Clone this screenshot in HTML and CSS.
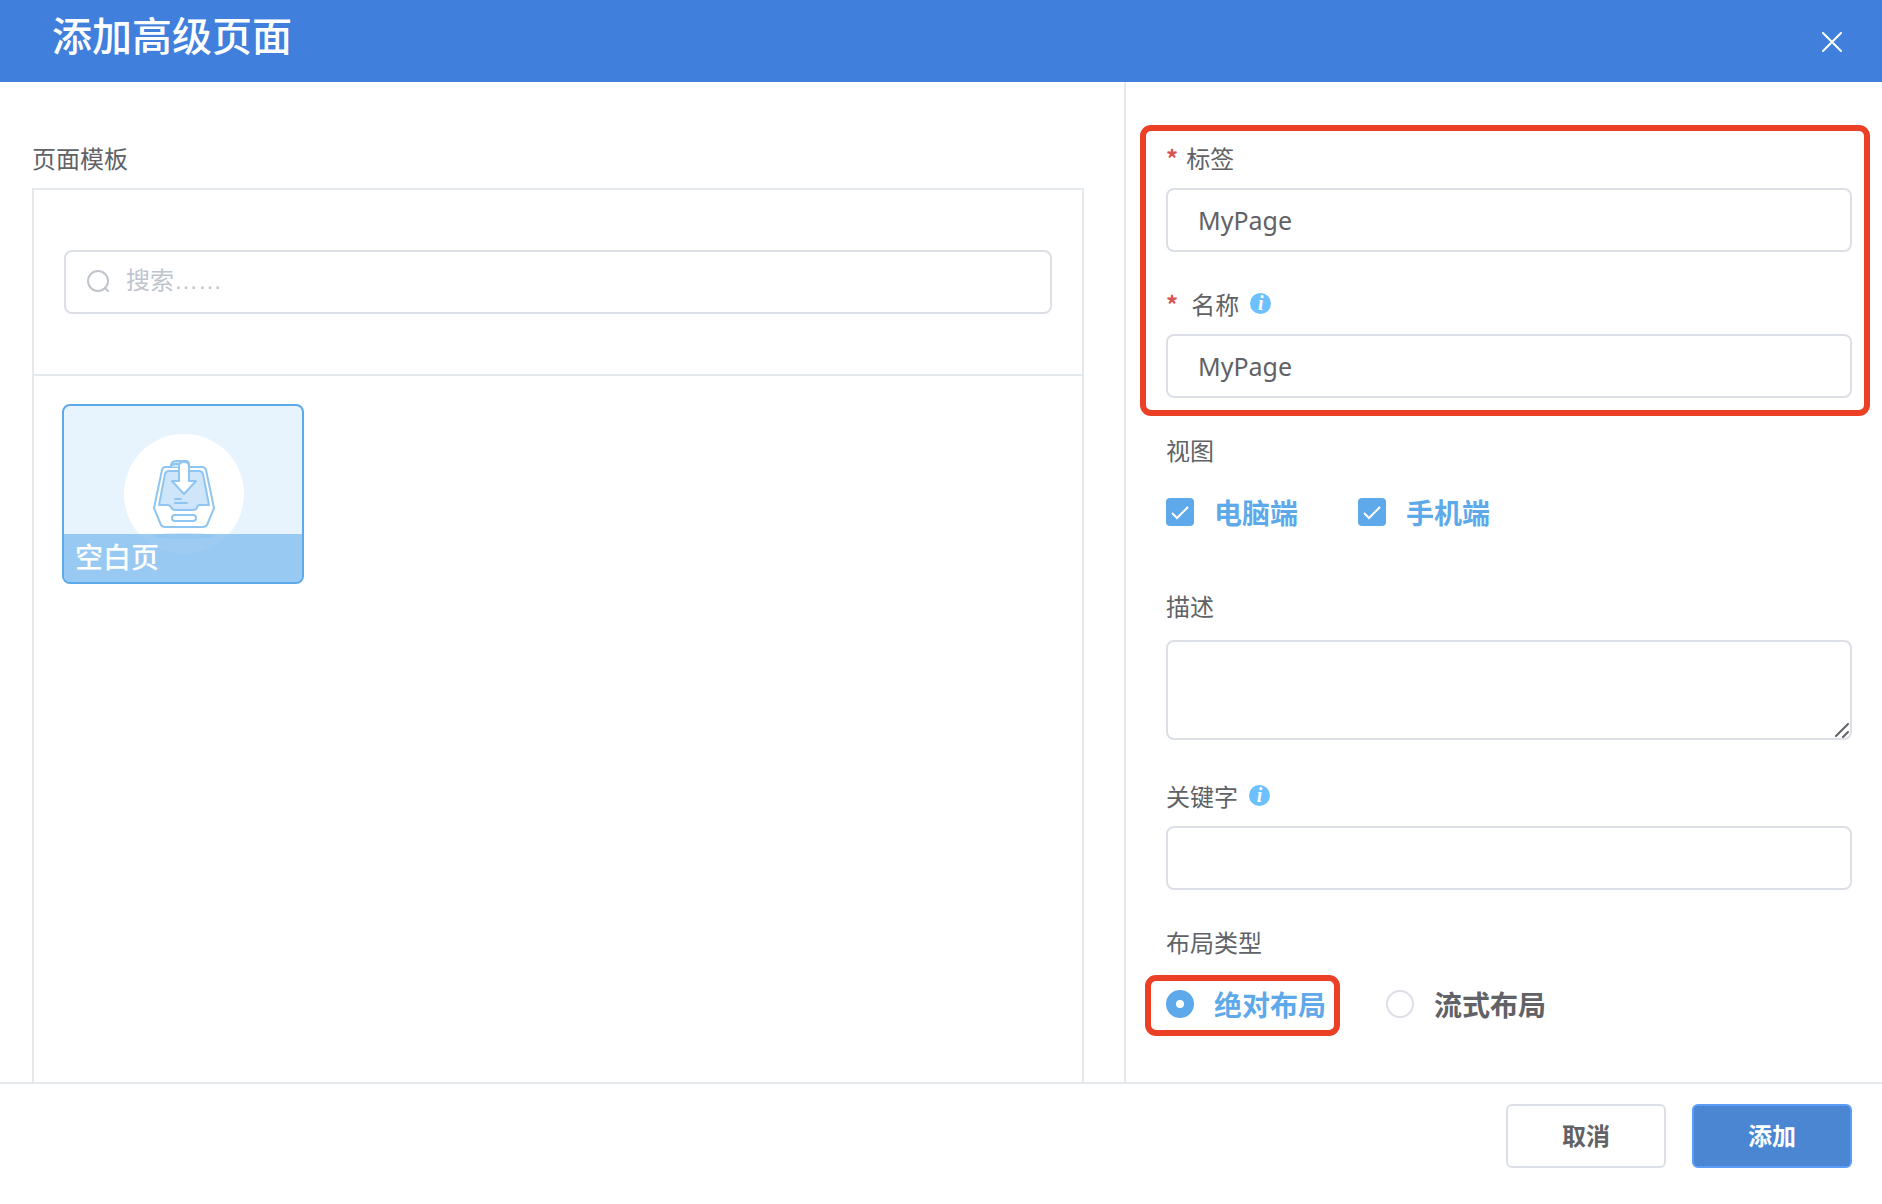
FILE: index.html
```html
<!DOCTYPE html>
<html lang="zh-CN">
<head>
<meta charset="utf-8">
<meta name="viewport" content="width=device-width, initial-scale=1">
<title>添加高级页面</title>
<link rel="stylesheet" href="styles.css">
</head>
<body>
<header class="header">
  <h1 class="title">添加高级页面</h1>
  <button class="close" type="button" aria-label="关闭">
    <svg width="20" height="20" viewBox="0 0 20 20" fill="none" stroke="currentColor" stroke-width="2" stroke-linecap="round"><path d="M1 1l18 18M19 1L1 19"/></svg>
  </button>
</header>

<main class="main">
  <section class="templates">
    <h2 class="label">页面模板</h2>
    <div class="panel">
      <div class="search-area">
        <div class="search">
          <svg class="search-icon" width="24" height="24" viewBox="0 0 24 24" fill="none" stroke="currentColor" stroke-width="2" stroke-linecap="round"><circle cx="11" cy="11" r="10"/><path d="M18 18l3 3"/></svg>
          <input class="input search-input" type="search" placeholder="搜索……" aria-label="搜索">
        </div>
      </div>
      <div class="cards">
        <button class="card" type="button">
          <svg class="card-art" viewBox="0 0 238 176" fill="none" stroke="#8fc5f1" stroke-width="2" stroke-linejoin="round" stroke-linecap="round" aria-hidden="true">
            <circle cx="120" cy="88" r="60" fill="#fff" stroke="none"/>
            <ellipse cx="120" cy="130" rx="31" ry="3" fill="#cfe6fa" stroke="none"/>
            <path d="M101 61H138Q141 61 142 64L150 102L143 119Q142 121 139 121H101Q98 121 97 119L90 102L98 64Q99 61 101 61Z" fill="#fff"/>
            <path d="M105 65H135Q138 65 139 68L145 99H136Q133 99 133 102Q132 104 129 104H111Q108 104 107 101Q106 99 103 99H95L101 68Q102 65 105 65Z" fill="#cfe5f9"/>
            <path d="M107 61V60Q107 55 112 55H122Q126 55 126 59V74H115V61Z" fill="#cfe5f9" stroke="none"/>
            <path d="M107 61V60Q107 55 112 55H122Q125 55 125 59"/>
            <path d="M107 61Q107 58 111 58H114"/>
            <path d="M115 60Q115 56 120 56Q125 56 125 60V75H132L120 88L108 75H115Z" fill="#fff"/>
            <path d="M111 93H117M111 97H123"/>
            <rect x="108" y="109" width="24" height="6" rx="3" fill="#fff"/>
          </svg>
          <span class="card-name">空白页</span>
        </button>
      </div>
    </div>
  </section>

  <form class="form" id="page-form">
    <div class="required-group">
      <div class="field">
        <label class="label" for="tag"><span class="star">*</span>标签</label>
        <input class="input" id="tag" type="text" value="MyPage">
      </div>
      <div class="field">
        <label class="label label-wide" for="name"><span class="star">*</span>名称<span class="info" aria-hidden="true">i</span></label>
        <input class="input" id="name" type="text" value="MyPage">
      </div>
    </div>

    <fieldset class="field choices-field">
      <legend class="label">视图</legend>
      <div class="choices">
        <label class="choice"><input class="check" type="checkbox" checked>电脑端</label>
        <label class="choice"><input class="check" type="checkbox" checked>手机端</label>
      </div>
    </fieldset>

    <div class="field">
      <label class="label" for="desc">描述</label>
      <div class="area-wrap">
        <textarea class="input area" id="desc"></textarea>
        <svg class="grip" width="16" height="16" viewBox="0 0 16 16" fill="none" stroke="#606266" stroke-width="2" stroke-linecap="round"><path d="M2 14L14 2M9 15l5-5"/></svg>
      </div>
    </div>

    <div class="field">
      <label class="label" for="keywords">关键字<span class="info" aria-hidden="true">i</span></label>
      <input class="input" id="keywords" type="text">
    </div>

    <fieldset class="field">
      <legend class="label">布局类型</legend>
      <div class="choices">
        <label class="choice highlighted"><input class="radio" type="radio" name="layout" checked>绝对布局</label>
        <label class="choice"><input class="radio" type="radio" name="layout">流式布局</label>
      </div>
    </fieldset>
  </form>
</main>

<footer class="footer">
  <button class="button" type="button">取消</button>
  <button class="button primary" type="submit" form="page-form">添加</button>
</footer>
</body>
</html>
```
FILE: styles.css
```css
* {
  box-sizing: border-box;
}

body {
  margin: 0;
  min-height: 100vh;
  display: flex;
  flex-direction: column;
  background: #fff;
  color: #606266;
  font-family: "Noto Sans CJK SC", "Noto Sans", sans-serif;
  font-size: 24px;
}

button,
input,
textarea {
  font: inherit;
  color: inherit;
}

.header {
  height: 82px;
  padding: 2px 38px 0 52px;
  display: flex;
  justify-content: space-between;
  background: #4080dc;
  color: #fff;
}

.title {
  margin: 0;
  font-size: 40px;
  font-weight: 500;
  line-height: 64px;
}

.close {
  align-self: center;
  display: flex;
  padding: 2px;
  border: 0;
  background: none;
  cursor: pointer;
}

.main {
  flex: 1;
  display: grid;
  grid-template-columns: 562fr 379fr;
}

.templates {
  display: flex;
  flex-direction: column;
  padding: 48px 40px 0 32px;
}

.label {
  display: flex;
  align-items: center;
  height: 58px;
  margin: 0;
  padding: 0 0 3px;
  font-size: 24px;
  font-weight: 400;
}

.panel {
  flex: 1;
  border: 2px solid #e4e9ed;
  border-bottom: 0;
}

.search-area {
  padding: 60px 30px;
  border-bottom: 2px solid #e4e9ed;
}

.search {
  position: relative;
}

.search-icon {
  position: absolute;
  top: 20px;
  left: 23px;
  color: #c0c4cc;
}

.input {
  display: block;
  width: 100%;
  height: 64px;
  padding: 0 30px;
  border: 2px solid #dcdfe6;
  border-radius: 8px;
  background: #fff;
  font-family: "Noto Sans", "Noto Sans CJK SC", sans-serif;
  font-size: 25px;
  outline: 0;
}

.search-input {
  padding-bottom: 3px;
  padding-left: 60px;
  font-family: "Liberation Sans", "Noto Sans CJK SC", sans-serif;
  font-size: 24px;
  appearance: none;
}

.input::placeholder {
  color: #c0c4cc;
}

.cards {
  display: flex;
  flex-wrap: wrap;
  gap: 28px;
  padding: 28px;
}

.card {
  position: relative;
  width: 242px;
  height: 180px;
  padding: 0;
  border: 2px solid #5ea9ea;
  border-radius: 8px;
  background: #e7f4fe;
  overflow: hidden;
  cursor: pointer;
}

.card-art {
  display: block;
  width: 100%;
  height: 100%;
}

.card-name {
  position: absolute;
  right: 0;
  bottom: 0;
  left: 0;
  height: 48px;
  padding-left: 11px;
  background: rgba(130, 188, 238, 0.78);
  color: #fff;
  font-size: 28px;
  font-weight: 500;
  line-height: 44px;
  text-align: left;
}

.form {
  display: flex;
  flex-direction: column;
  gap: 24px;
  padding: 48px 30px 46px 40px;
  border-left: 2px solid #e4e9ed;
}

.required-group {
  position: relative;
  display: flex;
  flex-direction: column;
  gap: 24px;
}

.required-group::after {
  content: "";
  position: absolute;
  inset: -5px -18px -18px -26px;
  border: 6px solid #ec4026;
  border-radius: 11px;
  pointer-events: none;
}

.field {
  margin: 0;
  padding: 0;
  border: 0;
  min-width: 0;
}

.star {
  margin-right: 8px;
  color: #d9534f;
  font-weight: 700;
}

.label-wide .star {
  margin-right: 13px;
}

.info {
  width: 21px;
  height: 21px;
  margin-left: 11px;
  border-radius: 50%;
  background: #6cc0fb;
  color: #fff;
  font: italic bold 20px/20px "Liberation Serif", serif;
  text-align: center;
}

.choices {
  display: flex;
  flex-wrap: wrap;
  align-items: center;
  gap: 0 60px;
  min-height: 64px;
}

.choices-field {
  padding-bottom: 10px;
}

.choice {
  display: flex;
  align-items: center;
  gap: 20px;
  font-size: 28px;
  font-weight: 700;
  line-height: 48px;
  cursor: pointer;
}

.choice:has(:checked) {
  color: #5ea9ea;
}

.highlighted {
  position: relative;
}

.highlighted::after {
  content: "";
  position: absolute;
  inset: -5px -14px -8px -21px;
  border: 6px solid #ec4026;
  border-radius: 11px;
  pointer-events: none;
}

.check,
.radio {
  appearance: none;
  width: 28px;
  height: 28px;
  margin: 0;
  border: 2px solid #dcdfe6;
  border-radius: 4px;
  background: #fff;
}

.check:checked {
  border-color: #5ea9ea;
  background: #5ea9ea url("data:image/svg+xml,%3Csvg xmlns='http://www.w3.org/2000/svg' viewBox='0 0 24 24' fill='none' stroke='white' stroke-width='2'%3E%3Cpath d='M4 13l5 5L20 7'/%3E%3C/svg%3E") center / 24px 24px no-repeat;
}

.radio {
  border-radius: 50%;
}

.radio:checked {
  border: 10px solid #5ea9ea;
}

.area-wrap {
  position: relative;
  padding: 4px 0;
}

.area {
  height: 100px;
  padding: 10px 30px;
  resize: vertical;
}

.area::-webkit-resizer {
  display: none;
}

.grip {
  position: absolute;
  right: 2px;
  bottom: 6px;
  pointer-events: none;
}

.footer {
  display: flex;
  justify-content: flex-end;
  gap: 26px;
  padding: 20px 30px 36px;
  border-top: 2px solid #e4e9ed;
}

.button {
  width: 160px;
  height: 64px;
  padding: 0 0 4px;
  border: 2px solid #dcdfe6;
  border-radius: 6px;
  background: #fff;
  font-weight: 700;
  cursor: pointer;
}

.primary {
  border-color: #5a9cf8;
  background: #4a86d2;
  color: #fff;
}
```
